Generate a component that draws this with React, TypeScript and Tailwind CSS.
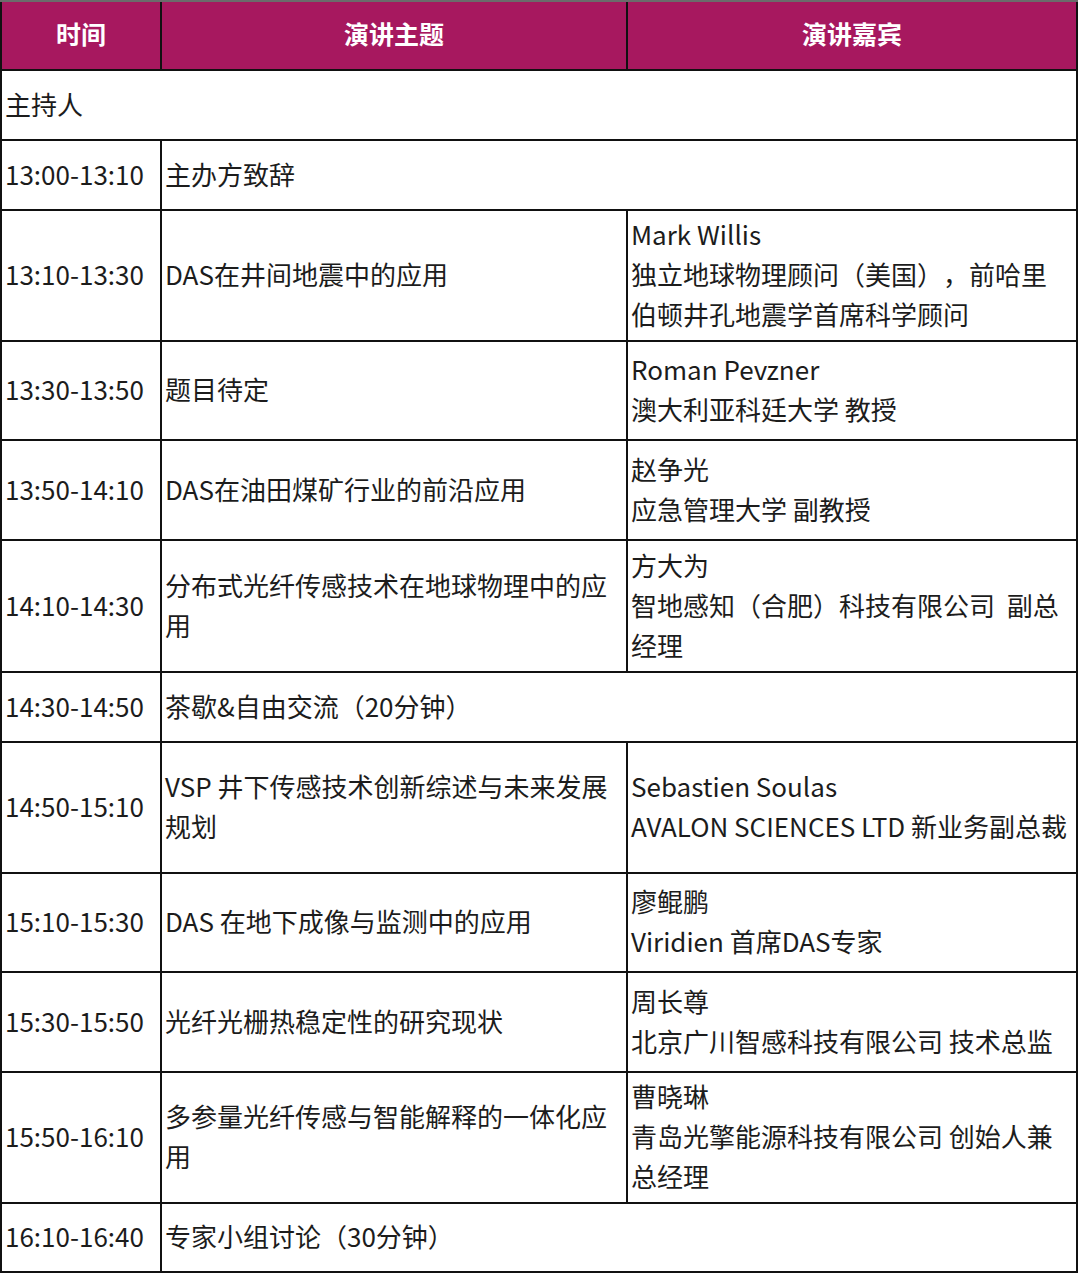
const rows: {
  h: string;
  time?: string;
  topic: string[];
  guest?: string[];
}[] = [
  { h: "h-[68px]", time: "13:00-13:10", topic: ["主办方致辞"] },
  {
    h: "h-[129px]",
    time: "13:10-13:30",
    topic: ["DAS在井间地震中的应用"],
    guest: ["Mark Willis", "独立地球物理顾问（美国），前哈里", "伯顿井孔地震学首席科学顾问"],
  },
  {
    h: "h-[97px]",
    time: "13:30-13:50",
    topic: ["题目待定"],
    guest: ["Roman Pevzner", "澳大利亚科廷大学 教授"],
  },
  {
    h: "h-[98px]",
    time: "13:50-14:10",
    topic: ["DAS在油田煤矿行业的前沿应用"],
    guest: ["赵争光", "应急管理大学 副教授"],
  },
  {
    h: "h-[130px]",
    time: "14:10-14:30",
    topic: ["分布式光纤传感技术在地球物理中的应", "用"],
    guest: ["方大为", "智地感知（合肥）科技有限公司  副总", "经理"],
  },
  { h: "h-[68px]", time: "14:30-14:50", topic: ["茶歇&自由交流（20分钟）"] },
  {
    h: "h-[129px]",
    time: "14:50-15:10",
    topic: ["VSP 井下传感技术创新综述与未来发展", "规划"],
    guest: ["Sebastien Soulas", "AVALON SCIENCES LTD 新业务副总裁"],
  },
  {
    h: "h-[97px]",
    time: "15:10-15:30",
    topic: ["DAS 在地下成像与监测中的应用"],
    guest: ["廖鲲鹏", "Viridien 首席DAS专家"],
  },
  {
    h: "h-[98px]",
    time: "15:30-15:50",
    topic: ["光纤光栅热稳定性的研究现状"],
    guest: ["周长尊", "北京广川智感科技有限公司 技术总监"],
  },
  {
    h: "h-[129px]",
    time: "15:50-16:10",
    topic: ["多参量光纤传感与智能解释的一体化应", "用"],
    guest: ["曹晓琳", "青岛光擎能源科技有限公司 创始人兼", "总经理"],
  },
  { h: "h-[67px]", time: "16:10-16:40", topic: ["专家小组讨论（30分钟）"] },
];

function Cell({
  lines,
  className = "",
}: {
  lines: string[];
  className?: string;
}) {
  return (
    <div className={`bg-white flex flex-col justify-center px-[3px] pb-[3px] ${className}`}>
      {lines.map((l, i) => (
        <div key={i} className="whitespace-pre leading-[40px]">
          {l}
        </div>
      ))}
    </div>
  );
}

function Head({ label }: { label: string }) {
  return (
    <div className="h-[67px] bg-[#a7185f] flex items-center justify-center pb-[3px] text-white font-bold text-[25px]">
      {label}
    </div>
  );
}

export default function App() {
  return (
    <div
      className="w-[1080px] bg-white text-[26px] text-[#1c1c1c] [text-spacing-trim:space-all]"
      style={{ fontFamily: '"Noto Sans CJK SC", "Noto Sans", sans-serif' }}
    >
      <div className="w-[1078px] grid grid-cols-[158px_464px_448px] gap-[2px] bg-[#111] p-[2px] pt-0 border-t-2 border-t-[#6b6b6b]">
        <Head label="时间" />
        <Head label="演讲主题" />
        <Head label="演讲嘉宾" />

        <Cell lines={["主持人"]} className="col-span-3 h-[68px]" />

        {rows.map((r, i) => (
          <div key={i} className="contents">
            <Cell lines={[r.time ?? ""]} className={r.h} />
            {r.guest ? (
              <>
                <Cell lines={r.topic} className={r.h} />
                <Cell lines={r.guest} className={r.h} />
              </>
            ) : (
              <Cell lines={r.topic} className={`col-span-2 ${r.h}`} />
            )}
          </div>
        ))}
      </div>
    </div>
  );
}
